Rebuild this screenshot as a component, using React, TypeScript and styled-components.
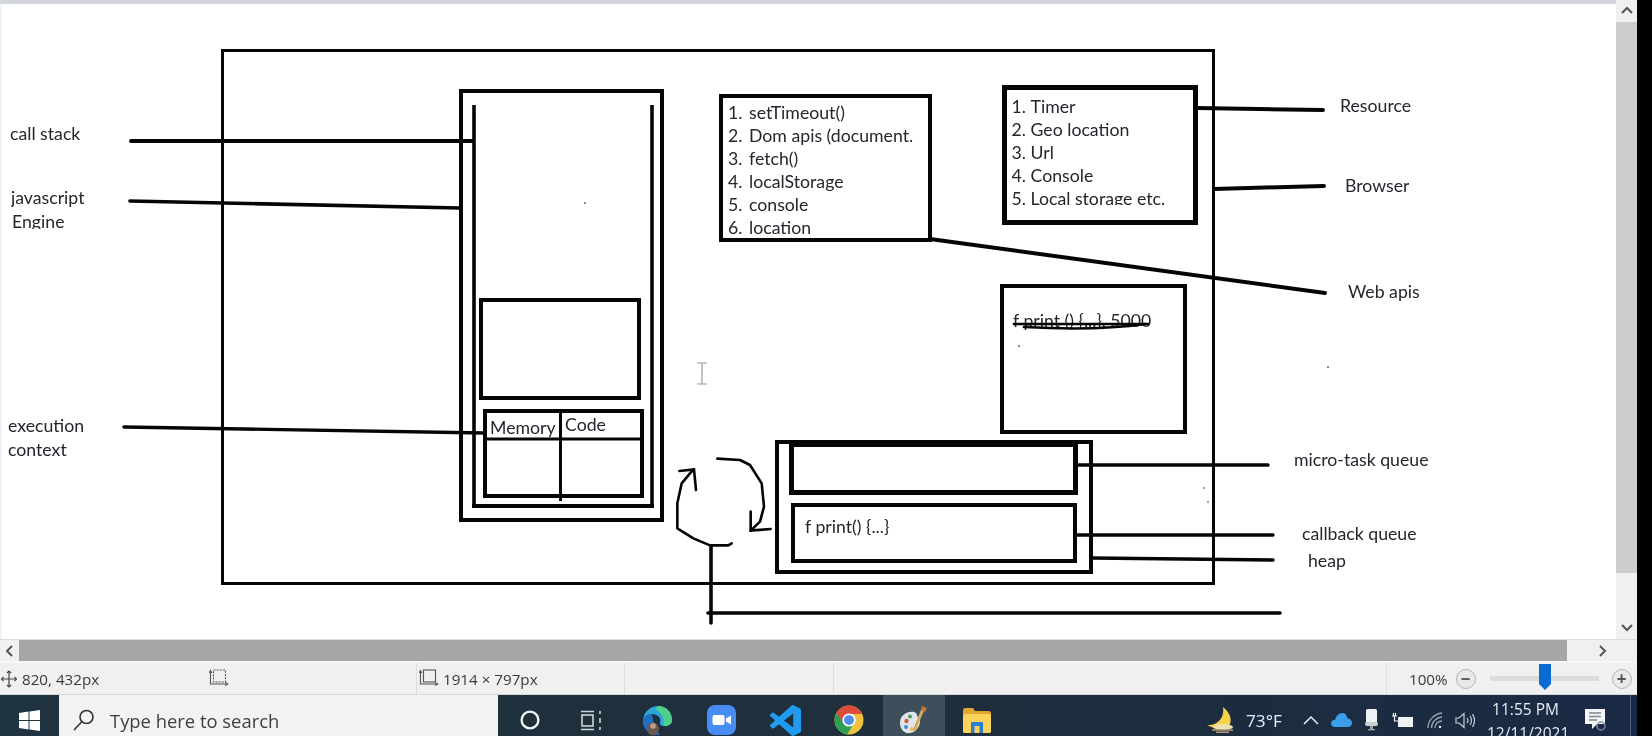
import React from "react";
import styled, { createGlobalStyle } from "styled-components";

const SHEET_TOP = 4;

const Global = createGlobalStyle`
  html, body { margin: 0; padding: 0; background: #000; overflow: hidden; }
  #root { width: 1652px; height: 736px; }
`;

const Window = styled.div`
  width: 1637px;
  height: 736px;
  display: flex;
  flex-direction: column;
  overflow: hidden;
  font-family: "Open Sans", "Liberation Sans", sans-serif;
  filter: blur(0.45px);
`;
const Workspace = styled.div`
  display: flex;
  height: 639px;
`;
const PaintColumn = styled.div`
  width: 1616px;
  display: flex;
  flex-direction: column;
`;
const TopStrip = styled.div`
  height: ${SHEET_TOP}px;
  background: #d3d6db;
`;
const Sheet = styled.div`
  position: relative;
  flex: 1;
  background: #fff;
  box-shadow: inset 2px 0 0 #eef2fa;
  overflow: hidden;
  font-family: Lato, "Liberation Sans", sans-serif;
  font-size: 17.7px;
  color: #23272d;
`;
const Wires = styled.svg`
  position: absolute;
  left: 0;
  top: 0;
  pointer-events: none;
`;
const Node = styled.div<{ $x: number; $y: number; $r: number; $b: number; $bw?: number; $pt?: number; $pl?: number }>`
  position: absolute;
  box-sizing: border-box;
  left: ${(p) => p.$x - (p.$bw ?? 4) / 2}px;
  top: ${(p) => p.$y - (p.$bw ?? 4) / 2 - SHEET_TOP}px;
  width: ${(p) => p.$r - p.$x + (p.$bw ?? 4)}px;
  height: ${(p) => p.$b - p.$y + (p.$bw ?? 4)}px;
  border: ${(p) => p.$bw ?? 4}px solid #050505;
  padding: ${(p) => p.$pt ?? 0}px 0 0 ${(p) => p.$pl ?? 0}px;
`;
const ListRow = styled.div<{ $num: number; $clip?: boolean }>`
  display: grid;
  grid-template-columns: ${(p) => p.$num}px auto;
  height: ${(p) => (p.$clip ? 18 : 23)}px;
  line-height: 23px;
  white-space: nowrap;
  overflow: hidden;
`;
const Label = styled.div<{ $x: number; $cy: number; $clip?: boolean }>`
  position: absolute;
  left: ${(p) => p.$x}px;
  top: ${(p) => p.$cy - 12 - SHEET_TOP}px;
  height: ${(p) => (p.$clip ? 19 : 24)}px;
  line-height: 24px;
  white-space: nowrap;
  overflow: hidden;
`;

const VScroll = styled.div`
  width: 21px;
  display: flex;
  flex-direction: column;
  background: #f0f0f0;
`;
const ArrowCell = styled.div<{ $h: number }>`
  height: ${(p) => p.$h}px;
  display: flex;
  align-items: center;
  justify-content: center;
  flex: none;
`;
const VThumb = styled.div`
  height: 551px;
  background: #cdcdcd;
`;
const VFill = styled.div`
  flex: 1;
`;
const HScroll = styled.div`
  height: 22px;
  box-sizing: border-box;
  border-top: 1px solid #dcdcdc;
  display: flex;
  background: #f0f0f0;
`;
const HArrow = styled.div<{ $w: number }>`
  width: ${(p) => p.$w}px;
  display: flex;
  align-items: center;
  justify-content: center;
`;
const HThumb = styled.div`
  width: 1548px;
  background: #a6a6a6;
`;
const StatusBar = styled.div`
  height: 34px;
  box-sizing: border-box;
  border-top: 2px solid #f7f7f7;
  background: #f0f0f0;
  display: flex;
  font-size: 15.2px;
  color: #3a3a3a;
  border-bottom: 1px solid #d6d6d6;
`;
const StatusCell = styled.div<{ $w: number; $pl?: number; $gap?: number; $edge?: boolean }>`
  width: ${(p) => p.$w}px;
  box-sizing: border-box;
  padding-left: ${(p) => p.$pl ?? 0}px;
  display: flex;
  align-items: center;
  gap: ${(p) => p.$gap ?? 4}px;
  border-right: ${(p) => (p.$edge ? "1px solid #dedede" : "0")};
  white-space: nowrap;
`;
const Circle = styled.div`
  width: 20px;
  height: 20px;
  box-sizing: border-box;
  border: 1.5px solid #b4b4b4;
  border-radius: 50%;
  background: #e9e9e9;
  display: flex;
  align-items: center;
  justify-content: center;
  font-size: 17px;
  font-weight: 700;
  line-height: 1;
  color: #555;
  flex: none;
`;
const Slider = styled.div`
  position: relative;
  width: 109px;
  height: 5px;
  background: #dcdcdc;
  margin: 0 5px 0 6px;
  flex: none;
`;
const SliderThumb = styled.svg`
  position: absolute;
  left: 49px;
  top: -12px;
`;

const Taskbar = styled.div`
  position: relative;
  height: 41px;
  display: flex;
  overflow: hidden;
  background: linear-gradient(90deg, #1f3340 0%, #1f2f3b 50%, #1a2a45 100%);
  color: #e8edf2;
`;
const Start = styled.div`
  width: 59px;
  box-sizing: border-box;
  padding-top: 9px;
  display: flex;
  align-items: center;
  justify-content: center;
  flex: none;
`;
const SearchBox = styled.div`
  width: 439px;
  flex: none;
  background: #f3f3f3;
  display: flex;
  align-items: center;
  padding: 9px 0 0 14px;
  gap: 15px;
  box-sizing: border-box;
  color: #3e3e3e;
  font-size: 18.4px;
`;
const TaskButton = styled.div<{ $w: number; $active?: boolean; $ml?: number }>`
  width: ${(p) => p.$w}px;
  margin-left: ${(p) => p.$ml ?? 0}px;
  box-sizing: border-box;
  padding-top: 9px;
  flex: none;
  display: flex;
  align-items: center;
  justify-content: center;
  background: ${(p) => (p.$active ? "#3e4f5c" : "transparent")};
`;
const Spacer = styled.div`
  width: 197px;
  flex: none;
`;
const TrayItem = styled.div<{ $ml: number; $w: number }>`
  margin-left: ${(p) => p.$ml}px;
  width: ${(p) => p.$w}px;
  box-sizing: content-box;
  padding-top: 9px;
  height: 32px;
  flex: none;
  display: flex;
  align-items: center;
  justify-content: center;
  white-space: nowrap;
`;
const Temp = styled.span`
  font-size: 17.2px;
`;
const Clock = styled.div`
  margin-left: 12px;
  width: 77px;
  flex: none;
  text-align: center;
  font-size: 15.5px;
  line-height: 24px;
  padding-top: 2px;
  white-space: nowrap;
`;
const EdgeLine = styled.div`
  position: absolute;
  right: 6px;
  top: 0;
  bottom: 0;
  width: 1px;
  background: #51627e;
`;

const webApis = ["setTimeout()", "Dom apis (document.", "fetch()", "localStorage", "console", "location"];
const resources = ["Timer", "Geo location", "Url", "Console", "Local storage etc."];

const labels: { t: string; x: number; cy: number; clip?: boolean }[] = [
  { t: "call stack", x: 10, cy: 134 },
  { t: "javascript", x: 11, cy: 198 },
  { t: "Engine", x: 12, cy: 222, clip: true },
  { t: "execution", x: 8, cy: 426 },
  { t: "context", x: 8, cy: 450 },
  { t: "Memory", x: 490, cy: 428 },
  { t: "Code", x: 565, cy: 425 },
  { t: "Resource", x: 1340, cy: 106 },
  { t: "Browser", x: 1345, cy: 186 },
  { t: "Web apis", x: 1348, cy: 292 },
  { t: "f print () {...}, 5000", x: 1013, cy: 321 },
  { t: "f print() {...}", x: 805, cy: 527 },
  { t: "micro-task queue", x: 1294, cy: 460 },
  { t: "callback queue", x: 1302, cy: 534 },
  { t: "heap", x: 1308, cy: 561 },
];

const Chevron = ({ d }: { d: string }) => (
  <svg width="14" height="14" viewBox="0 0 14 14">
    <polyline points={d} fill="none" stroke="#555" strokeWidth="2" />
  </svg>
);

const loopPoint = (X: number, Y: number) => `${660 + X / 3},${440 + Y / 3}`;

const Diagram = () => (
  <Wires width="1616" height="635" viewBox={`0 ${SHEET_TOP} 1616 635`}>
    <g fill="none" stroke="#050505" strokeLinecap="round">
      <path d="M131 141H473" strokeWidth="4" />
      <path d="M130 201L460 208" strokeWidth="3.6" />
      <path d="M124 427L485 433" strokeWidth="3.4" />
      <path d="M474 105V505M652 105V505" strokeWidth="3.6" strokeLinecap="butt" />
      <path d="M472 506H654" strokeWidth="4" strokeLinecap="butt" />
      <path d="M485 439H642" strokeWidth="3" strokeLinecap="butt" />
      <path d="M560.5 411V501" strokeWidth="3" strokeLinecap="butt" />
      <path d="M1196 108L1323 110" strokeWidth="4" />
      <path d="M1214 189L1324 186" strokeWidth="4" />
      <path d="M930 239L1325 293" strokeWidth="4" />
      <path d="M1014 324H1148" strokeWidth="2.6" />
      <path d="M1024 327C1060 329 1110 329 1146 324" strokeWidth="2.6" />
      <path d="M1075 465H1268" strokeWidth="3.4" />
      <path d="M1077 535H1273" strokeWidth="3.4" />
      <path d="M1092 558L1273 560" strokeWidth="3.4" />
      <path d="M708 613H1280" strokeWidth="3.6" />
      <path d="M711 547V623" strokeWidth="3.6" />
      <path
        d={`M${loopPoint(215, 310)} L${loopPoint(205, 316)} L${loopPoint(150, 316)} L${loopPoint(100, 295)} L${loopPoint(52, 265)} L${loopPoint(52, 190)} L${loopPoint(65, 130)} L${loopPoint(100, 88)}`}
        strokeWidth="2.6"
        strokeLinejoin="round"
      />
      <path d={`M${loopPoint(58, 93)} L${loopPoint(102, 88)} L${loopPoint(108, 150)}`} strokeWidth="2.6" />
      <path
        d={`M${loopPoint(172, 56)} L${loopPoint(240, 60)} L${loopPoint(270, 75)} L${loopPoint(305, 130)} L${loopPoint(312, 200)} L${loopPoint(300, 245)} L${loopPoint(272, 272)}`}
        strokeWidth="2.6"
        strokeLinejoin="round"
      />
      <path d={`M${loopPoint(272, 215)} L${loopPoint(272, 272)} L${loopPoint(332, 267)}`} strokeWidth="2.6" />
      <path d="M697 363H707M702 363V384M697 384H707" stroke="#9a9a9a" strokeWidth="1.2" strokeLinecap="butt" />
    </g>
    <g fill="#8a8a8a">
      <rect x="584" y="202" width="2" height="2" />
      <rect x="1018" y="345" width="2" height="2" />
      <rect x="1327" y="366" width="2" height="2" />
    </g>
    <g fill="#7fa6e0">
      <rect x="1203" y="487" width="2" height="2" />
      <rect x="1207" y="501" width="2" height="2" />
    </g>
  </Wires>
);

const WindowsLogo = () => (
  <svg width="21" height="21" viewBox="0 0 21 21" fill="#fff">
    <path d="M0 3L9.5 1.6V10H0zM10.5 1.4L21 0V10H10.5zM0 11H9.5V19.4L0 18zM10.5 11H21V21L10.5 19.6z" />
  </svg>
);
const SearchIcon = () => (
  <svg width="22" height="22" viewBox="0 0 22 22" fill="none" stroke="#333" strokeWidth="1.6">
    <circle cx="13.5" cy="8" r="6.5" />
    <path d="M8.8 12.8L1 21" />
  </svg>
);
const MoveIcon = () => (
  <svg width="16" height="18" viewBox="0 0 16 18" fill="none" stroke="#444" strokeWidth="1.2">
    <path d="M8 1V17M0.5 9H15.5" />
    <path d="M6 3L8 1L10 3M6 15L8 17L10 15M2.5 7L0.5 9L2.5 11M13.5 7L15.5 9L13.5 11" />
  </svg>
);
const SelectIcon = ({ solid }: { solid?: boolean }) => (
  <svg width="20" height="19" viewBox="0 0 20 19" fill="none" stroke="#555" strokeWidth="1.1">
    <path d="M1.5 3V15H18" />
    <path d="M0 4L1.5 1.5L3 4M16 13.5L19 15L16 16.5" />
    <rect x="4.5" y="1" width="12" height="12" strokeDasharray={solid ? undefined : "2 1.2"} />
  </svg>
);
const Cortana = () => (
  <svg width="20" height="20" viewBox="0 0 20 20">
    <circle cx="10" cy="10" r="8.4" fill="none" stroke="#f0f2f4" strokeWidth="2.4" />
  </svg>
);
const TaskView = () => (
  <svg width="22" height="21" viewBox="0 0 22 21" fill="none" stroke="#cfd4d8" strokeWidth="1.6">
    <rect x="2" y="5" width="11" height="11" />
    <path d="M1 1.5H14M1 19.5H14M20 1V4M20 8V13M20 17V20" />
  </svg>
);
const Edge = () => (
  <svg width="31" height="31" viewBox="0 0 31 31">
    <path d="M1 15C2 6 9 1 16 1C25 1 30 8 30 15C30 19 27 21 22 21C19 21 17 19 18 17C20 13 15 9 10 9C6 9 3 11 1 15Z" fill="#2aa5d8" />
    <path d="M16 1C25 1 30 8 30 15C30 19 27 21 22 21C21 17 23 11 16 6C13 4 14 2 16 1Z" fill="#4fd08a" />
    <path d="M1 15C3 11 6 9 10 9C11 14 12 22 18 30C8 31 0 24 1 15Z" fill="#1c6fc4" />
    <ellipse cx="11" cy="24" rx="6" ry="6.5" fill="#6b5a50" />
    <circle cx="11" cy="21" r="2.8" fill="#c79f84" />
  </svg>
);
const Zoom = () => (
  <svg width="29" height="30" viewBox="0 0 29 30">
    <rect width="29" height="30" rx="8" fill="#4a8cf6" />
    <rect x="5.5" y="10" width="12" height="10" rx="2" fill="#fff" />
    <path d="M19 13.5L24 10.5V19.5L19 16.5Z" fill="#fff" />
  </svg>
);
const VsCode = () => (
  <svg width="31" height="31" viewBox="0 0 24 24">
    <path
      fill="#1f9cf0"
      d="M23.15 2.587L18.21.21a1.494 1.494 0 0 0-1.705.29l-9.46 8.63-4.12-3.128a.999.999 0 0 0-1.276.057L.327 7.261A1 1 0 0 0 .326 8.74L3.899 12 .326 15.26a1 1 0 0 0 .001 1.479L1.65 17.94a.999.999 0 0 0 1.276.057l4.12-3.128 9.46 8.63a1.492 1.492 0 0 0 1.704.29l4.942-2.377A1.5 1.5 0 0 0 24 20.06V3.939a1.5 1.5 0 0 0-.85-1.352zm-5.146 14.861L10.826 12l7.178-5.448v10.896z"
    />
  </svg>
);
const Chrome = () => (
  <svg width="30" height="30" viewBox="0 0 30 30">
    <circle cx="15" cy="15" r="14.5" fill="#f0c33c" />
    <path d="M15 .5A14.5 14.5 0 0 0 2.4 8L8.5 18.5L15 9H28A14.5 14.5 0 0 0 15 .5Z" fill="#dd4b3e" />
    <path d="M2.4 8A14.5 14.5 0 0 0 13 29.4L19 20H11Z" fill="#2f9e55" />
    <circle cx="15" cy="15" r="6.6" fill="#fff" />
    <circle cx="15" cy="15" r="5" fill="#4d8ef0" />
  </svg>
);
const Palette = () => (
  <svg width="30" height="30" viewBox="0 0 30 30">
    <path d="M1 18C1 10 8 6 15 7C19 8 17 11 20 13C23 15 20 27 11 28C5 29 1 24 1 18Z" fill="#dfe5ea" />
    <circle cx="7.5" cy="16" r="2.2" fill="#d9534f" />
    <circle cx="11" cy="11.5" r="2" fill="#4f9e5c" />
    <circle cx="7" cy="22" r="2" fill="#3f8ad6" />
    <circle cx="12.5" cy="24" r="1.8" fill="#e6c14b" />
    <path d="M24 4L15 26" stroke="#d8a860" strokeWidth="3" />
    <path d="M23 1L28 3L26 7L22 5Z" fill="#c8773a" />
  </svg>
);
const Folder = () => (
  <svg width="28" height="25" viewBox="0 0 28 25">
    <path d="M0 2C0 1 1 0 2 0H10L12 3H26C27 3 28 4 28 5V7H0Z" fill="#e3a72d" />
    <rect y="6" width="28" height="19" rx="1.5" fill="#fbd25a" />
    <path d="M8 25V14H20V25H16.5V18H11.5V25Z" fill="#2b7fd0" />
  </svg>
);
const Moon = () => (
  <svg width="30" height="26" viewBox="0 0 30 26">
    <path d="M17 0C25 6 27 15 22 20C16 23 8 22 1 18C10 19 19 12 17 0Z" fill="#f7d34a" />
    <ellipse cx="17" cy="20" rx="10" ry="3" fill="#efe0b0" />
    <path d="M6 23H27M10 25.4H23" stroke="#b39a78" strokeWidth="1.6" />
  </svg>
);
const Caret = () => (
  <svg width="16" height="10" viewBox="0 0 16 10" fill="none" stroke="#e8edf2" strokeWidth="1.5">
    <path d="M1 9L8 2L15 9" />
  </svg>
);
const Cloud = () => (
  <svg width="21" height="14" viewBox="0 0 21 14">
    <path d="M4 14C1 14 0 12 0 10C0 8 2 6.5 4 7C5 3 8 0 11 0C14 0 16 2 16.5 5.5C19 5.5 21 7.5 21 10C21 12 19.5 14 17 14Z" fill="#3a9fe8" />
  </svg>
);
const UsbStick = () => (
  <svg width="13" height="22" viewBox="0 0 13 22">
    <rect x="1" y="0" width="11" height="15" rx="1.5" fill="#eef1f4" />
    <rect x="0" y="13" width="13" height="4" rx="2" fill="#c9ced3" />
    <rect x="5" y="17" width="3" height="3" fill="#9aa2a8" />
    <rect x="3" y="20" width="7" height="1.4" fill="#9aa2a8" />
  </svg>
);
const Power = () => (
  <svg width="21" height="15" viewBox="0 0 21 15">
    <rect x="6" y="4" width="15" height="10" fill="#eef1f4" />
    <path d="M0 3H5M1.5 0V3M3.5 0V3M2.5 3V8H8" stroke="#eef1f4" strokeWidth="1.2" fill="none" />
  </svg>
);
const Wifi = () => (
  <svg width="16" height="17" viewBox="0 0 16 17" fill="none" stroke="#9aa6b0" strokeWidth="1.3">
    <path d="M1 16C1 8 7 2 15 1M4.5 16C4.5 10 9 5.5 15 5M8 16C8 12 11 9 15 9" />
    <circle cx="13" cy="15" r="1.2" fill="#eef1f4" stroke="none" />
  </svg>
);
const Speaker = () => (
  <svg width="20" height="17" viewBox="0 0 20 17" fill="none" stroke="#c8ced4" strokeWidth="1.2">
    <path d="M1 6V11H4L9 15.5V1.5L4 6Z" />
    <path d="M12 6C13.2 7.5 13.2 9.5 12 11M15 4C17 6.5 17 10.5 15 13M17.5 2C20 6 20 11 17.5 15" />
  </svg>
);
const Notes = () => (
  <svg width="22" height="22" viewBox="0 0 22 22">
    <path d="M1 0H21V15H13L8 20V15H1Z" fill="#f3f5f7" />
    <path d="M5 4H17M5 7.5H17M5 11H13" stroke="#7d8790" strokeWidth="1.3" />
    <circle cx="17" cy="17" r="4" fill="none" stroke="#8a95a0" strokeWidth="1.3" />
  </svg>
);

export default function App() {
  return (
    <>
      <Global />
      <Window>
        <Workspace>
          <PaintColumn>
            <TopStrip />
            <Sheet>
              <Node $x={223} $y={51} $r={1213} $b={583} $bw={3.6} />
              <Node $x={461} $y={91} $r={662} $b={520} />
              <Node $x={481} $y={300} $r={639} $b={398} />
              <Node $x={485} $y={411} $r={642} $b={496} />
              <Node $x={721} $y={96} $r={930} $b={240} $pt={3} $pl={5}>
                {webApis.map((item, i) => (
                  <ListRow key={item} $num={21}>
                    <span>{i + 1}.</span>
                    <span>{item}</span>
                  </ListRow>
                ))}
              </Node>
              <Node $x={1004} $y={87} $r={1195} $b={222} $bw={5} $pt={5} $pl={5}>
                {resources.map((item, i) => (
                  <ListRow key={item} $num={19} $clip={i === resources.length - 1}>
                    <span>{i + 1}.</span>
                    <span>{item}</span>
                  </ListRow>
                ))}
              </Node>
              <Node $x={1002} $y={286} $r={1185} $b={432} />
              <Node $x={777} $y={442} $r={1091} $b={572} />
              <Node $x={791} $y={444} $r={1075} $b={492} $bw={5} />
              <Node $x={793} $y={505} $r={1075} $b={561} />
              {labels.map((l) => (
                <Label key={l.t} $x={l.x} $cy={l.cy} $clip={l.clip}>
                  {l.t}
                </Label>
              ))}
              <Diagram />
            </Sheet>
          </PaintColumn>
          <VScroll>
            <ArrowCell $h={22}>
              <Chevron d="2,9 7,4 12,9" />
            </ArrowCell>
            <VThumb />
            <VFill />
            <ArrowCell $h={24}>
              <Chevron d="2,5 7,10 12,5" />
            </ArrowCell>
          </VScroll>
        </Workspace>
        <HScroll>
          <HArrow $w={19}>
            <Chevron d="9,2 4,7 9,12" />
          </HArrow>
          <HThumb />
          <HArrow $w={70}>
            <Chevron d="5,2 10,7 5,12" />
          </HArrow>
        </HScroll>
        <StatusBar>
          <StatusCell $w={209} $pl={1} $gap={5}>
            <MoveIcon />
            820, 432px
          </StatusCell>
          <StatusCell $w={208} $edge>
            <SelectIcon />
          </StatusCell>
          <StatusCell $w={208} $pl={2} $edge>
            <SelectIcon solid />
            1914 × 797px
          </StatusCell>
          <StatusCell $w={209} $edge />
          <StatusCell $w={553} $edge />
          <StatusCell $w={250} $pl={22} $gap={8}>
            100%
            <Circle>−</Circle>
            <Slider>
              <SliderThumb width="12" height="26" viewBox="0 0 12 26">
                <path d="M0 0H12V20L6 26L0 20Z" fill="#0a6cd0" />
              </SliderThumb>
            </Slider>
            <Circle>+</Circle>
          </StatusCell>
        </StatusBar>
        <Taskbar>
          <Start>
            <WindowsLogo />
          </Start>
          <SearchBox>
            <SearchIcon />
            Type here to search
          </SearchBox>
          <TaskButton $w={64}>
            <Cortana />
          </TaskButton>
          <TaskButton $w={58}>
            <TaskView />
          </TaskButton>
          <TaskButton $w={74}>
            <Edge />
          </TaskButton>
          <TaskButton $w={54}>
            <Zoom />
          </TaskButton>
          <TaskButton $w={74}>
            <VsCode />
          </TaskButton>
          <TaskButton $w={54}>
            <Chrome />
          </TaskButton>
          <TaskButton $w={62} $ml={7} $active>
            <Palette />
          </TaskButton>
          <TaskButton $w={64}>
            <Folder />
          </TaskButton>
          <Spacer />
          <TrayItem $ml={0} $w={30}>
            <Moon />
          </TrayItem>
          <TrayItem $ml={10} $w={36}>
            <Temp>73°F</Temp>
          </TrayItem>
          <TrayItem $ml={21} $w={16}>
            <Caret />
          </TrayItem>
          <TrayItem $ml={12} $w={21}>
            <Cloud />
          </TrayItem>
          <TrayItem $ml={13} $w={13}>
            <UsbStick />
          </TrayItem>
          <TrayItem $ml={14} $w={21}>
            <Power />
          </TrayItem>
          <TrayItem $ml={14} $w={16}>
            <Wifi />
          </TrayItem>
          <TrayItem $ml={12} $w={20}>
            <Speaker />
          </TrayItem>
          <Clock>
            11:55 PM
            <br />
            12/11/2021
          </Clock>
          <TrayItem $ml={20} $w={22}>
            <Notes />
          </TrayItem>
          <EdgeLine />
        </Taskbar>
      </Window>
    </>
  );
}
